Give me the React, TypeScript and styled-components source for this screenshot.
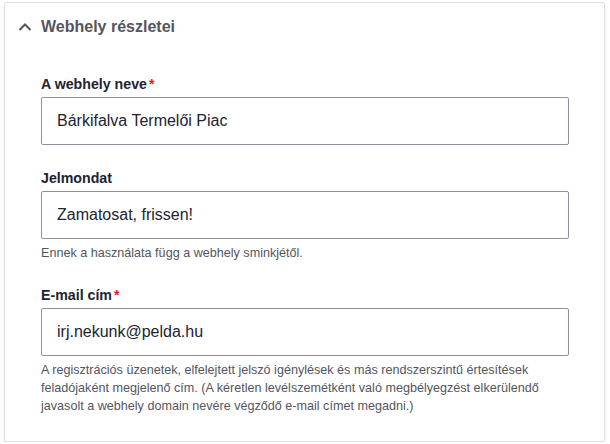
import React from "react";
import styled, { createGlobalStyle } from "styled-components";

const GlobalStyle = createGlobalStyle`
  html, body {
    margin: 0;
    padding: 0;
    background: #ffffff;
  }
  body {
    font-family: "Liberation Sans", Arial, sans-serif;
    color: #222330;
  }
`;

const Page = styled.div`
  padding: 2px 5px 0 4px;
`;

const Card = styled.section`
  border: 1px solid #dedfe4;
  border-radius: 2px;
  box-shadow: 0 2px 3px rgba(0, 0, 0, 0.08);
  background: #ffffff;
`;

const Summary = styled.div`
  display: flex;
  align-items: center;
  gap: 9px;
  padding: 12px 20px 12px 13px;
  font-size: 16px;
  line-height: 24px;
  font-weight: 700;
  color: #55565b;
`;

const Body = styled.div`
  padding: 24px 35px 26px 36px;
`;

const Item = styled.div`
  & + & {
    margin-top: 24px;
  }
`;

const Label = styled.label`
  display: block;
  margin-bottom: 4px;
  font-size: 14.2px;
  line-height: 18px;
  font-weight: 700;
  color: #222330;
`;

const Required = styled.span`
  color: #dc2323;
  margin-left: 2px;
`;

const Input = styled.input`
  display: block;
  box-sizing: border-box;
  width: 100%;
  height: 48px;
  padding: 12px 15px;
  border: 1px solid #8e929c;
  border-radius: 2px;
  background: #ffffff;
  font-family: inherit;
  font-size: 16px;
  line-height: 24px;
  color: #222330;
  outline: none;
`;

const Description = styled.div<{ $wide?: boolean }>`
  margin-top: 5px;
  font-size: 12.6px;
  line-height: 18px;
  color: #545560;
  max-width: ${(p) => (p.$wide ? "500px" : "none")};
`;

const Chevron = () => (
  <svg width="14" height="14" viewBox="0 0 14 14" aria-hidden="true">
    <path
      d="M1.5 10 L7 4.5 L12.5 10"
      fill="none"
      stroke="#545560"
      strokeWidth="2"
    />
  </svg>
);

const App = () => (
  <Page>
    <GlobalStyle />
    <Card>
      <Summary>
        <Chevron />
        Webhely részletei
      </Summary>
      <Body>
        <Item>
          <Label>
            A webhely neve<Required>*</Required>
          </Label>
          <Input defaultValue="Bárkifalva Termelői Piac" />
        </Item>
        <Item>
          <Label>Jelmondat</Label>
          <Input defaultValue="Zamatosat, frissen!" />
          <Description>
            Ennek a használata függ a webhely sminkjétől.
          </Description>
        </Item>
        <Item>
          <Label>
            E-mail cím<Required>*</Required>
          </Label>
          <Input defaultValue="irj.nekunk@pelda.hu" />
          <Description $wide>
            A regisztrációs üzenetek, elfelejtett jelszó igénylések és más
            rendszerszintű értesítések feladójaként megjelenő cím. (A
            kéretlen levélszemétként való megbélyegzést elkerülendő javasolt a
            webhely domain nevére végződő e-mail címet megadni.)
          </Description>
        </Item>
      </Body>
    </Card>
  </Page>
);

export default App;
